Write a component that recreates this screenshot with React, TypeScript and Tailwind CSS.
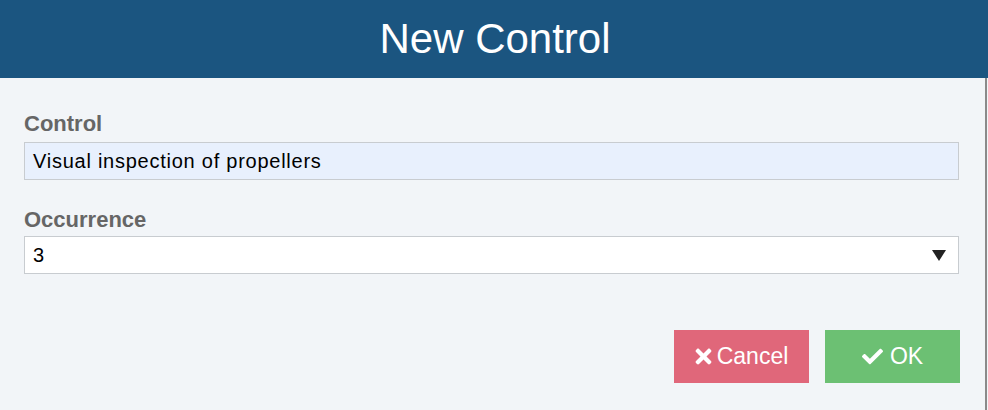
import { FaCheck, FaTimes } from 'react-icons/fa';

const font = { fontFamily: '"Liberation Sans", Arial, sans-serif' };

const NewControl = () => {
  return (
    <div className="w-[988px] h-[410px] bg-[#f2f5f8] flex flex-col" style={font}>
      <div className="h-[78px] bg-[#1b5580] flex items-center justify-center">
        <h1 className="text-white text-[42px] leading-none pb-[1px] pl-[2px]">New Control</h1>
      </div>

      <div className="flex-1 w-[987px] border-r-2 border-[#8a8a8a] px-6 pt-[35px]">
        <label className="block text-[#666] font-bold text-[22px] leading-none">Control</label>
        <div className="mt-[7px] h-[38px] w-[935px] bg-[#e8f0fd] border border-[#c8ccd0] flex items-center px-2 text-[20px] tracking-[0.75px] text-black">
          Visual inspection of propellers
        </div>

        <label className="block mt-[29px] text-[#666] font-bold text-[22px] leading-none">Occurrence</label>
        <div className="mt-[5px] h-[38px] w-[935px] bg-white border border-[#c8ccd0] flex items-center justify-between pl-2 pr-[12px] text-[20px] text-black">
          <span>3</span>
          <svg width="14" height="11" viewBox="0 0 14 11">
            <path d="M0 0H14L7 11Z" fill="#222" />
          </svg>
        </div>

        <div className="mt-[56px] flex justify-end gap-4 pr-[1px]">
          <button className="w-[135px] h-[53px] bg-[#e0677a] text-white text-[23px] flex items-center justify-center gap-[5px]">
            <FaTimes className="w-[17px] h-[23px]" />
            Cancel
          </button>
          <button className="w-[135px] h-[53px] bg-[#6cc073] text-white text-[23px] flex items-center justify-center gap-[7px]">
            <FaCheck className="w-[21px] h-[21px]" />
            OK
          </button>
        </div>
      </div>
    </div>
  );
};

export default function App() {
  return <NewControl />;
}
